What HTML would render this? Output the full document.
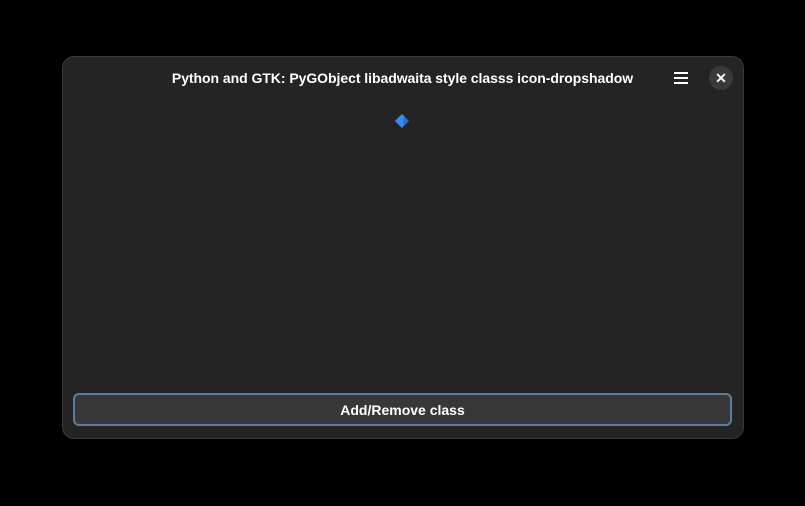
<!DOCTYPE html>
<html><head><style>
body{margin:0;width:805px;height:506px;background:#000;overflow:hidden;font-family:"Liberation Sans",sans-serif}
.win{position:absolute;left:62px;top:56px;width:682px;height:383px;background:#242424;border:1px solid #3a3a3a;border-radius:12px;box-sizing:border-box}
.title{position:absolute;left:0;width:805px;top:70px;text-align:center;color:#fff;font-weight:bold;font-size:14px;letter-spacing:-0.05px}
.ham{position:absolute;left:674px;top:72px;width:14px}
.ham i{display:block;height:2px;background:#fff;margin-bottom:3px}
.close{position:absolute;left:709px;top:66px;width:24px;height:24px;border-radius:50%;background:#3a3a3a;color:#fff;font-size:14px;font-weight:bold;text-align:center;line-height:24px}
.btn{position:absolute;left:73px;top:393px;width:659px;height:33px;box-sizing:border-box;border:2px solid #5a7ca3;border-radius:6px;background:#383838;color:#fff;font-weight:bold;font-size:14px;text-align:center;line-height:30px}
</style></head><body>
<div class="win"></div>
<div class="title">Python and GTK: PyGObject libadwaita style classs icon-dropshadow</div>
<div class="ham"><i></i><i></i><i></i></div>
<div class="close">✕</div>
<svg style="position:absolute;left:393px;top:112px" width="18" height="18" viewBox="0 0 18 18"><path d="M9 2 L16 9 L9 16 L2 9Z" fill="#2a6fd0"/><path d="M9 2 L12 5 Q9 8 11 12 L9 16 L2 9Z" fill="#3d8ae8"/></svg>
<div class="btn">Add/Remove class</div>
</body></html>
